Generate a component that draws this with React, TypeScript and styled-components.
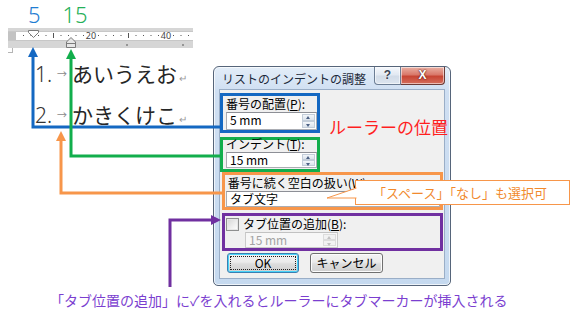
import styled, { createGlobalStyle } from 'styled-components';

const GlobalStyle = createGlobalStyle`
  html, body {
    margin: 0;
    padding: 0;
    background: #fff;
  }
  body {
    font-family: "Noto Sans CJK JP", "Noto Sans", sans-serif;
  }
`;

const JP = '"Noto Sans CJK JP", "Noto Sans", sans-serif';

const BLUE = '#1468c2';
const GREEN = '#12ae4c';
const ORANGE = '#f7964a';
const PURPLE = '#7030a0';

const Page = styled.div`
  position: relative;
  width: 576px;
  height: 323px;
  overflow: hidden;
  background: #fff;
`;

const Header = styled.div`
  display: flex;
  gap: 22px;
  height: 28px;
  padding-left: 28px;
`;

const PosLabel = styled.span<{ $color: string }>`
  font-family: "Noto Sans", sans-serif;
  font-size: 22px;
  font-weight: 300;
  line-height: 28px;
  color: ${p => p.$color};
`;

const RulerBar = styled.div`
  margin-left: 8px;
  width: 185px;
  height: 20px;
  background: #d6d6d6;
  svg {
    display: block;
  }
`;

const MM = 3.75;

const Ruler = () => {
  const marks = [];
  for (let mm = 2; 8 + mm * MM < 183; mm += 2) {
    const x = 8 + mm * MM;
    if (mm % 20 === 0) {
      marks.push(
        <text
          key={mm}
          x={x}
          y={10.5}
          fontSize={9}
          textAnchor="middle"
          fill="#444"
          fontFamily="Noto Sans, sans-serif"
        >
          {mm}
        </text>
      );
    } else if (mm % 10 === 0) {
      marks.push(<rect key={mm} x={x - 0.5} y={5} width={1} height={5} fill="#555" />);
    } else {
      marks.push(<rect key={mm} x={x - 0.5} y={7} width={1} height={1} fill="#555" />);
    }
  }
  return (
    <RulerBar>
      <svg width={185} height={20} viewBox="0 0 185 20">
        <rect x={0} y={3.5} width={185} height={0.8} fill="#b9b9b9" />
        <rect x={0} y={4} width={8} height={8} fill="#c3c3c3" />
        <rect x={8} y={4} width={177} height={8} fill="#fff" />
        <rect x={0} y={12} width={185} height={0.8} fill="#c4c4c4" />
        {marks}
        <rect x={118.5} y={16} width={1} height={2} fill="#555" />
        <rect x={174.5} y={16} width={1} height={2} fill="#555" />
        <path d="M20.5 2.5 H30.5 V4.5 L25.5 9.5 L20.5 4.5 Z" fill="#fff" stroke="#7a7a7a" />
        <path d="M63 9.5 L67.5 14 V19.5 H58.5 V14 Z" fill="#e6e6e6" stroke="#7a7a7a" />
        <path d="M58.5 15.5 H67.5" stroke="#7a7a7a" />
      </svg>
    </RulerBar>
  );
};

const Body = styled.div`
  display: flex;
  align-items: flex-start;
`;

const Doc = styled.div`
  width: 213px;
`;

const CornerMark = styled.div`
  margin-left: 8px;
  width: 4px;
  height: 4px;
  border-right: 1px solid #b5b5b5;
  border-bottom: 1px solid #b5b5b5;
`;

const ListLine = styled.div`
  height: 41px;
  padding-left: 35px;
  font-family: ${JP};
  font-size: 21px;
  line-height: 41px;
  color: #262626;
  white-space: nowrap;
  &:first-of-type {
    margin-top: 1px;
  }
`;

const ListNum = styled.span`
  display: inline-block;
  width: 22px;
  font-family: "Noto Sans", sans-serif;
  font-weight: 300;
  color: #333;
`;

const TabMark = styled.span`
  display: inline-block;
  width: 15px;
  font-size: 10px;
  color: #8a8a8a;
  vertical-align: 4px;
`;

const ReturnMark = styled.span`
  margin-left: 2px;
  font-size: 10px;
  color: #9a9a9a;
`;

const Dialog = styled.div`
  box-sizing: border-box;
  display: flex;
  flex-direction: column;
  width: 238px;
  height: 220px;
  margin-top: 18px;
  padding: 0 6px 7px 6px;
  border: 1px solid #56657a;
  border-radius: 6px 6px 5px 5px;
  background: linear-gradient(#e3edf8, #cfdff2 24px, #c5d9ef);
  box-shadow: inset 0 0 0 1px rgba(255, 255, 255, 0.7);
`;

const TitleBar = styled.div`
  display: flex;
  align-items: flex-start;
  height: 23px;
`;

const TitleText = styled.div`
  flex: 1;
  padding-left: 2px;
  font-family: ${JP};
  font-size: 12px;
  line-height: 23px;
  color: #1d2a3a;
  white-space: nowrap;
`;

const CaptionButton = styled.div<{ $close?: boolean }>`
  box-sizing: border-box;
  width: ${p => (p.$close ? 44 : 27)}px;
  height: 18px;
  margin-right: ${p => (p.$close ? -1 : 0)}px;
  border: 1px solid ${p => (p.$close ? '#6b3a36' : '#6b7d94')};
  border-top: none;
  border-left-width: ${p => (p.$close ? 0 : 1)}px;
  border-radius: ${p => (p.$close ? '0 0 4px 0' : '0 0 0 4px')};
  background: ${p =>
    p.$close
      ? 'linear-gradient(#eab1a4, #d9786a 45%, #c74534 55%, #d56f5d)'
      : 'linear-gradient(#f5f8fc, #e2e9f2 45%, #d2dce8 55%, #dde5ef)'};
  box-shadow: inset 0 0 0 1px rgba(255, 255, 255, 0.55);
  font-family: "Liberation Sans", sans-serif;
  font-size: 12px;
  font-weight: bold;
  line-height: 17px;
  text-align: center;
  color: ${p => (p.$close ? '#fff' : '#3b4656')};
  text-shadow: ${p =>
    p.$close ? '0 0 1px #5a1a14, 0 0 2px #5a1a14' : '0 0 2px #fff'};
`;

const Client = styled.div`
  flex: 1;
  display: flex;
  flex-direction: column;
  background: #f0f0f0;
  box-shadow: 0 0 0 1px #9aaec7;
`;

const Highlight = styled.div<{
  $color: string;
  $width: number;
  $height: number;
  $top: number;
  $left?: number;
  $inset: number;
}>`
  box-sizing: border-box;
  display: flex;
  flex-direction: column;
  width: ${p => p.$width}px;
  height: ${p => p.$height}px;
  margin-top: ${p => p.$top}px;
  margin-left: ${p => p.$left ?? 0}px;
  padding-left: ${p => p.$inset}px;
  border: 3px solid ${p => p.$color};
`;

const FieldLabel = styled.div<{ $height: number; $shift?: number }>`
  height: ${p => p.$height}px;
  margin-top: ${p => p.$shift ?? 0}px;
  font-family: ${JP};
  font-size: 12px;
  line-height: ${p => p.$height}px;
  color: #000;
  white-space: nowrap;
  u {
    text-decoration: underline;
  }
`;

const SpinBox = styled.div<{ $width: number; $height: number; $indent: number; $disabled?: boolean }>`
  box-sizing: border-box;
  display: flex;
  width: ${p => p.$width}px;
  height: ${p => p.$height}px;
  margin-left: ${p => p.$indent}px;
  border: 1px solid ${p => (p.$disabled ? '#cacaca' : '#abadb3')};
  border-top-color: ${p => (p.$disabled ? '#c2c2c2' : '#8d8f96')};
  background: ${p => (p.$disabled ? '#f7f7f7' : '#fff')};
`;

const SpinValue = styled.div<{ $disabled?: boolean }>`
  flex: 1;
  padding-left: 3px;
  font-family: ${JP};
  font-size: 12px;
  line-height: 14px;
  color: ${p => (p.$disabled ? '#a3a3a3' : '#000')};
  white-space: pre;
`;

const SpinButtons = styled.div`
  display: flex;
  flex-direction: column;
  width: 13px;
  margin: 1px 1px 1px 0;
`;

const SpinArrow = styled.div<{ $up?: boolean; $disabled?: boolean }>`
  position: relative;
  flex: 1;
  background: ${p =>
    p.$disabled ? '#f2f2f2' : 'linear-gradient(#f3f6fa, #dbe3ec)'};
  border: 1px solid ${p => (p.$disabled ? '#dcdcdc' : '#c3cdd9')};
  &::after {
    content: '';
    position: absolute;
    left: 3px;
    top: ${p => (p.$up ? 1 : 2)}px;
    border-left: 2.5px solid transparent;
    border-right: 2.5px solid transparent;
    ${p =>
      p.$up
        ? `border-bottom: 3px solid ${p.$disabled ? '#c2c2c2' : '#4d6185'};`
        : `border-top: 3px solid ${p.$disabled ? '#c2c2c2' : '#4d6185'};`}
  }
`;

const Spin = (props: { value: string; width: number; height: number; indent: number; disabled?: boolean }) => (
  <SpinBox
    $width={props.width}
    $height={props.height}
    $indent={props.indent}
    $disabled={props.disabled}
  >
    <SpinValue $disabled={props.disabled}>{props.value}</SpinValue>
    <SpinButtons>
      <SpinArrow $up $disabled={props.disabled} />
      <SpinArrow $disabled={props.disabled} />
    </SpinButtons>
  </SpinBox>
);

const SelectBox = styled.div`
  box-sizing: border-box;
  display: flex;
  width: 214px;
  height: 16px;
  margin-left: 1px;
  border: 1px solid #abadb3;
  border-top-color: #8d8f96;
  background: #fff;
`;

const SelectButton = styled.div`
  position: relative;
  width: 15px;
  margin: 1px;
  border: 1px solid #a9b3c0;
  background: linear-gradient(#f3f3f3, #dcdcdc);
  &::after {
    content: '';
    position: absolute;
    left: 4px;
    top: 5px;
    border-left: 3px solid transparent;
    border-right: 3px solid transparent;
    border-top: 4px solid #333;
  }
`;

const CheckRow = styled.div`
  display: flex;
  align-items: center;
  gap: 4px;
  height: 16px;
`;

const CheckBox = styled.div`
  box-sizing: border-box;
  width: 13px;
  height: 13px;
  margin-left: 1px;
  border: 1px solid #8e8f8f;
  background: linear-gradient(135deg, #d5d5d5, #f4f4f4 70%, #fff);
  box-shadow: inset 0 0 0 1px #e6e6e6;
`;

const ButtonRow = styled.div`
  display: flex;
  gap: 11px;
  margin-top: 2px;
  padding-left: 7px;
`;

const PushButton = styled.div<{ $width: number; $default?: boolean }>`
  box-sizing: border-box;
  position: relative;
  width: ${p => p.$width}px;
  height: 20px;
  border: 1px solid ${p => (p.$default ? '#3c7fb1' : '#707070')};
  border-radius: 3px;
  background: linear-gradient(#f3f3f3, #ebebeb 45%, #dddddd 55%, #cfcfcf);
  box-shadow: ${p =>
    p.$default ? 'inset 0 0 0 1px #48d3f8' : 'inset 0 0 0 1px #fcfcfc'};
  font-family: ${JP};
  font-size: 12px;
  line-height: 18px;
  text-align: center;
  color: #000;
  &::after {
    content: '';
    display: ${p => (p.$default ? 'block' : 'none')};
    position: absolute;
    inset: 2px;
    border: 1px dotted #222;
  }
`;

const RedNote = styled.div`
  position: absolute;
  left: 329px;
  top: 115px;
  font-family: ${JP};
  font-size: 17px;
  line-height: 24px;
  color: #ff1f1f;
  white-space: nowrap;
`;

const Callout = styled.div`
  box-sizing: border-box;
  position: absolute;
  left: 355px;
  top: 180px;
  width: 215px;
  height: 25px;
  padding-left: 17px;
  border: 1px solid ${ORANGE};
  background: #fff;
  font-family: ${JP};
  font-size: 13px;
  line-height: 23px;
  color: #f18a2e;
  white-space: nowrap;
  svg {
    position: absolute;
    left: -30px;
    top: 5px;
  }
`;

const Caption = styled.div`
  margin-top: 4px;
  padding-left: 50px;
  font-family: ${JP};
  font-size: 14px;
  line-height: 20px;
  color: #7b3fd0;
  white-space: nowrap;
`;

const Overlay = styled.svg`
  position: absolute;
  left: 0;
  top: 0;
  pointer-events: none;
`;

const Arrows = () => (
  <Overlay width={576} height={323} viewBox="0 0 576 323">
    <polyline points="33,55 33,127 221,127" stroke={BLUE} strokeWidth={3} fill="none" />
    <polygon points="33,47 28,57 38,57" fill={BLUE} />
    <polyline points="71,57 71,156 221,156" stroke={GREEN} strokeWidth={3} fill="none" />
    <polygon points="71,49 66,59 76,59" fill={GREEN} />
    <polyline points="61,138 61,193 223,193" stroke={ORANGE} strokeWidth={3} fill="none" />
    <polygon points="61,131 56,141 66,141" fill={ORANGE} />
    <polyline points="170,287 170,220 212,220" stroke={PURPLE} strokeWidth={3} fill="none" />
    <polygon points="221,220 211,215 211,225" fill={PURPLE} />
  </Overlay>
);

const App = () => (
  <Page>
    <GlobalStyle />
    <Header>
      <PosLabel $color="#1f7dd2">5</PosLabel>
      <PosLabel $color="#25b058">15</PosLabel>
    </Header>
    <Ruler />
    <Body>
      <Doc>
        <CornerMark />
        <ListLine>
          <ListNum>1.</ListNum>
          <TabMark>→</TabMark>あいうえお<ReturnMark>↵</ReturnMark>
        </ListLine>
        <ListLine>
          <ListNum>2.</ListNum>
          <TabMark>→</TabMark>かきくけこ<ReturnMark>↵</ReturnMark>
        </ListLine>
      </Doc>
      <Dialog>
        <TitleBar>
          <TitleText>リストのインデントの調整</TitleText>
          <CaptionButton>?</CaptionButton>
          <CaptionButton $close>X</CaptionButton>
        </TitleBar>
        <Client>
          <Highlight $color={BLUE} $width={100} $height={40} $top={3} $inset={3}>
            <FieldLabel $height={16}>
              番号の配置(<u>P</u>):
            </FieldLabel>
            <Spin value="5 mm" width={91} height={18} indent={0} />
          </Highlight>
          <Highlight $color={GREEN} $width={100} $height={35} $top={4} $inset={3}>
            <FieldLabel $height={16} $shift={-4}>
              インデント(<u>T</u>):
            </FieldLabel>
            <Spin value="15 mm" width={91} height={16} indent={0} />
          </Highlight>
          <Highlight $color={ORANGE} $width={221} $height={38} $top={0} $left={2} $inset={0}>
            <FieldLabel $height={16}>
              &nbsp;番号に続く空白の扱い(<u>W</u>):
            </FieldLabel>
            <SelectBox>
              <SpinValue>タブ文字</SpinValue>
              <SelectButton />
            </SelectBox>
          </Highlight>
          <Highlight $color={PURPLE} $width={221} $height={38} $top={3} $left={2} $inset={0}>
            <CheckRow>
              <CheckBox />
              <FieldLabel $height={16}>
                タブ位置の追加(<u>B</u>):
              </FieldLabel>
            </CheckRow>
            <Spin value="15 mm" width={93} height={16} indent={20} disabled />
          </Highlight>
          <ButtonRow>
            <PushButton $width={72} $default>
              OK
            </PushButton>
            <PushButton $width={73}>キャンセル</PushButton>
          </ButtonRow>
        </Client>
      </Dialog>
    </Body>
    <Caption>「タブ位置の追加」に✓を入れるとルーラーにタブマーカーが挿入される</Caption>
    <RedNote>ルーラーの位置</RedNote>
    <Callout>
      <svg width={31} height={14} viewBox="0 0 31 14">
        <polygon points="31,2 1,12 31,12" fill="#fff" />
        <polyline points="30.5,2 1,12 30.5,12" fill="none" stroke={ORANGE} strokeWidth={1} />
      </svg>
      「スペース」「なし」も選択可
    </Callout>
    <Arrows />
  </Page>
);

export default App;
